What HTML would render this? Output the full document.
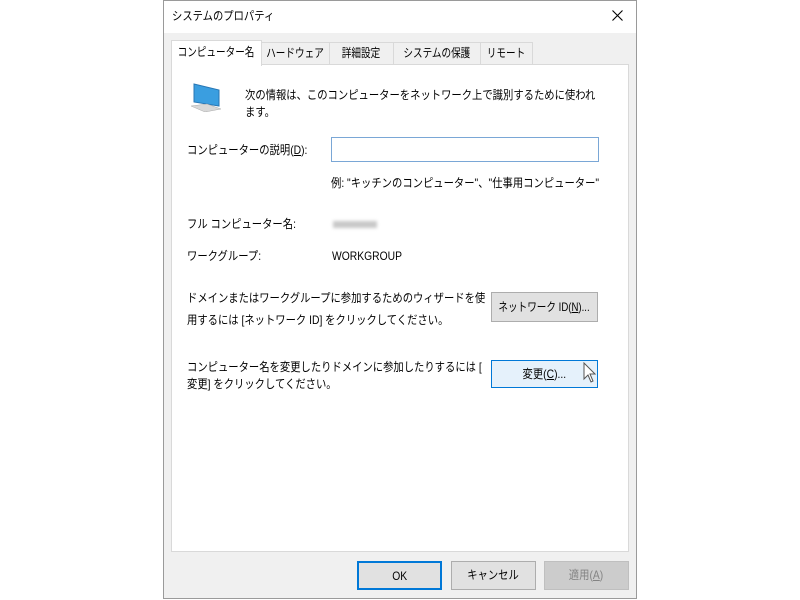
<!DOCTYPE html>
<html><head><meta charset="utf-8"><style>
*{margin:0;padding:0;box-sizing:border-box}
body{width:800px;height:600px;background:#fff;position:relative;font-family:"Liberation Sans","Noto Sans CJK JP",sans-serif;font-size:12px;color:#000;overflow:hidden}
.a{position:absolute;white-space:nowrap;line-height:16px;transform:scaleX(.86);transform-origin:0 0}
.dlg{position:absolute;left:163px;top:0;width:474px;height:599px;border:1px solid #9a9a9a;background:#f0f0f0}
.tb{position:absolute;left:0;top:0;width:472px;height:32px;background:#fff}
.tab{position:absolute;top:42px;height:22px;background:#f0f0f0;border:1px solid #d9d9d9;border-bottom:none;text-align:center;line-height:20px;font-size:12px;white-space:nowrap;overflow:visible}
.panel{position:absolute;left:171px;top:64px;width:458px;height:488px;background:#fff;border:1px solid #d9d9d9}
.btn{position:absolute;background:#e1e1e1;border:1px solid #adadad;text-align:center;font-size:12px;white-space:nowrap}
.s{display:inline-block;transform:scaleX(.86)}
.t{display:inline-block;transform:scaleX(.8);margin:0 -20px}
</style></head><body>
<div class="dlg"><div class="tb"></div></div>
<div class="a" style="left:172px;top:8px">システムのプロパティ</div>
<svg style="position:absolute;left:612px;top:10px" width="11" height="11" viewBox="0 0 11 11"><path d="M0.5,0.5 L10.5,10.5 M10.5,0.5 L0.5,10.5" stroke="#000" stroke-width="1.1"/></svg>
<div class="panel"></div>
<div class="tab" style="left:261px;width:69px"><span class="t">ハードウェア</span></div>
<div class="tab" style="left:329px;width:65px"><span class="t">詳細設定</span></div>
<div class="tab" style="left:393px;width:88px"><span class="t">システムの保護</span></div>
<div class="tab" style="left:480px;width:53px"><span class="t">リモート</span></div>
<div class="tab" style="left:171px;top:40px;width:91px;height:26px;background:#fff;line-height:22px"><span class="t">コンピューター名</span></div>
<svg style="position:absolute;left:189px;top:82px" width="34" height="30" viewBox="0 0 34 30">
<polygon points="5,2 30,8 30,24 5,20" fill="#3a9ee0" stroke="#2877b5" stroke-width="1"/>
<polygon points="2,24 18,22 32,27 16,30" fill="#d8d8d8" stroke="#aaa" stroke-width="0.5"/>
</svg>
<div class="a" style="left:245px;top:87px">次の情報は、このコンピューターをネットワーク上で識別するために使われ</div>
<div class="a" style="left:245px;top:104px">ます。</div>
<div class="a" style="left:187px;top:142px">コンピューターの説明(<u>D</u>):</div>
<div style="position:absolute;left:331px;top:137px;width:268px;height:25px;border:1px solid #7aa7d6;background:#fff"></div>
<div class="a" style="left:331px;top:175px">例: "キッチンのコンピューター"、"仕事用コンピューター"</div>
<div class="a" style="left:187px;top:216px">フル コンピューター名:</div>
<div style="position:absolute;left:333px;top:221px;width:44px;height:7px;background:#c8c8c8;filter:blur(1.5px)"></div>
<div class="a" style="left:187px;top:248px">ワークグループ:</div>
<div class="a" style="left:332px;top:248px">WORKGROUP</div>
<div class="a" style="left:187px;top:290px">ドメインまたはワークグループに参加するためのウィザードを使</div>
<div class="a" style="left:187px;top:312px">用するには [ネットワーク ID] をクリックしてください。</div>
<div class="btn" style="left:491px;top:292px;width:107px;height:30px;line-height:28px"><span class="t">ネットワーク ID(<u>N</u>)...</span></div>
<div class="a" style="left:187px;top:359px">コンピューター名を変更したりドメインに参加したりするには [</div>
<div class="a" style="left:187px;top:376px">変更] をクリックしてください。</div>
<div class="btn" style="left:491px;top:360px;width:107px;height:28px;line-height:26px;background:#e5f1fb;border-color:#0078d7"><span class="s">変更(<u>C</u>)...</span></div>
<svg style="position:absolute;left:583px;top:362px" width="14" height="22" viewBox="0 0 14 22"><path d="M1,1 L1,17 L5,13 L8,20 L10,19 L7,12 L12,12 Z" fill="#fff" stroke="#555" stroke-width="1"/></svg>
<div class="btn" style="left:357px;top:561px;width:85px;height:29px;line-height:27px;border-color:#0078d7;border-width:2px"><span class="s">OK</span></div>
<div class="btn" style="left:451px;top:561px;width:85px;height:29px;line-height:27px"><span class="s">キャンセル</span></div>
<div class="btn" style="left:544px;top:561px;width:85px;height:29px;line-height:27px;background:#cccccc;border-color:#bfbfbf;color:#838383"><span class="s">適用(<u>A</u>)</span></div>
</body></html>
